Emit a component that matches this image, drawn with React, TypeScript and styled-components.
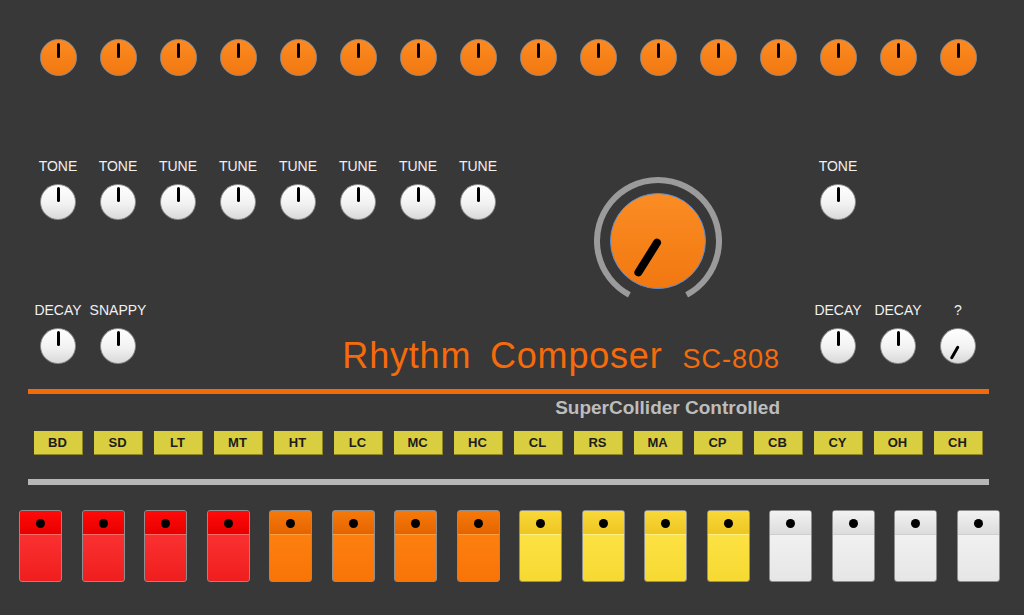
import React from "react";
import styled, { createGlobalStyle } from "styled-components";

const GlobalStyle = createGlobalStyle`
  html, body {
    margin: 0;
    padding: 0;
    background: #383838;
  }
  body {
    font-family: "Liberation Sans", Arial, sans-serif;
  }
`;

type Cell = { col: number; label: string; angle?: number };
type PadTone = "red" | "orange" | "yellow" | "white";

const toneRow: Cell[] = [
  { col: 1, label: "TONE" },
  { col: 2, label: "TONE" },
  { col: 3, label: "TUNE" },
  { col: 4, label: "TUNE" },
  { col: 5, label: "TUNE" },
  { col: 6, label: "TUNE" },
  { col: 7, label: "TUNE" },
  { col: 8, label: "TUNE" },
  { col: 14, label: "TONE" },
];

const decayRow: Cell[] = [
  { col: 1, label: "DECAY" },
  { col: 2, label: "SNAPPY" },
  { col: 14, label: "DECAY" },
  { col: 15, label: "DECAY" },
  { col: 16, label: "?", angle: 210 },
];

const instruments = ["BD", "SD", "LT", "MT", "HT", "LC", "MC", "HC", "CL", "RS", "MA", "CP", "CB", "CY", "OH", "CH"];

const padTones: PadTone[] = instruments.map((_, i) =>
  i < 4 ? "red" : i < 8 ? "orange" : i < 12 ? "yellow" : "white"
);

const padColors: Record<PadTone, { top: [string, string]; body: [string, string]; line: string }> = {
  red: { top: ["#ff0a0a", "#e80000"], body: ["#ff3a3a", "#f01e1e"], line: "#ff6a6a" },
  orange: { top: ["#f57a0a", "#e66400"], body: ["#ff8614", "#f87406"], line: "#ffa040" },
  yellow: { top: ["#f8d838", "#efc622"], body: ["#ffe64c", "#f6d932"], line: "#fff080" },
  white: { top: ["#f2f2f2", "#dcdcdc"], body: ["#f6f6f6", "#e6e6e6"], line: "#cfcfcf" },
};

export default function App() {
  return (
    <>
      <GlobalStyle />
      <Panel>
        <ControlGrid>
          {instruments.map((name, i) => (
            <TopKnob key={name} $col={i + 1} $tone="orange" $size={37}>
              <Pointer $len={15} $angle={0} />
            </TopKnob>
          ))}

          {toneRow.map((c) => (
            <KnobCell key={`t${c.col}`} $col={c.col} $row={2}>
              <Label>{c.label}</Label>
              <Knob $tone="white" $size={36}>
                <Pointer $len={15} $angle={c.angle ?? 0} />
              </Knob>
            </KnobCell>
          ))}

          <BigKnob>
            <svg width="128" height="128" viewBox="0 0 128 128">
              <defs>
                <linearGradient id="bigOrange" x1="0" y1="0" x2="0" y2="1">
                  <stop offset="0" stopColor="#fb8c24" />
                  <stop offset="1" stopColor="#f27810" />
                </linearGradient>
              </defs>
              <path
                d="M35.36 117.86 A61 61 0 1 1 92.64 117.86"
                fill="none"
                stroke="#9b9b9b"
                strokeWidth="6"
              />
              <circle cx="64" cy="64" r="47.5" fill="url(#bigOrange)" stroke="#5b8fd6" strokeWidth="1" />
              <line x1="63" y1="65.7" x2="44.4" y2="95.4" stroke="#000" strokeWidth="8" strokeLinecap="round" />
            </svg>
          </BigKnob>

          {decayRow.map((c) => (
            <KnobCell key={`d${c.col}`} $col={c.col} $row={3}>
              <Label>{c.label}</Label>
              <Knob $tone="white" $size={36}>
                <Pointer $len={15} $angle={c.angle ?? 0} />
              </Knob>
            </KnobCell>
          ))}

          <Title>
            <TitleMain>Rhythm Composer</TitleMain>
            <TitleModel>SC-808</TitleModel>
          </Title>
        </ControlGrid>

        <OrangeRule />
        <Subtitle>SuperCollider Controlled</Subtitle>

        <LabelRow>
          {instruments.map((name) => (
            <InstLabel key={name}>{name}</InstLabel>
          ))}
        </LabelRow>

        <GrayRule />

        <PadRow>
          {instruments.map((name, i) => (
            <Pad key={name} $tone={padTones[i]}>
              <PadTop $tone={padTones[i]}>
                <Dot />
              </PadTop>
            </Pad>
          ))}
        </PadRow>
      </Panel>
    </>
  );
}

const Panel = styled.main`
  width: 1024px;
  height: 615px;
  padding-top: 39px;
  box-sizing: border-box;
  overflow: hidden;
  background: #383838;
`;

const ControlGrid = styled.div`
  display: grid;
  grid-template-columns: repeat(16, 60px);
  grid-template-rows: 37px 62px 77px;
  row-gap: 82px;
  margin-left: 28px;
  width: 960px;
`;

const Knob = styled.div<{ $tone: "orange" | "white"; $size: number }>`
  position: relative;
  width: ${({ $size }) => $size}px;
  height: ${({ $size }) => $size}px;
  box-sizing: border-box;
  border-radius: 50%;
  border: 1.5px solid #8a8d92;
  background: ${({ $tone }) =>
    $tone === "orange"
      ? "linear-gradient(#fb8a22, #f27810)"
      : "linear-gradient(#ffffff, #f2f2f2 55%, #d9d9d9)"};
`;

const TopKnob = styled(Knob)<{ $col: number }>`
  grid-row: 1;
  grid-column: ${({ $col }) => $col};
  justify-self: center;
`;

const Pointer = styled.span<{ $len: number; $angle: number }>`
  position: absolute;
  left: 50%;
  bottom: 50%;
  width: 3px;
  height: ${({ $len }) => $len}px;
  margin-left: -1.5px;
  background: #000;
  border-radius: 1.5px;
  transform-origin: 50% 100%;
  transform: rotate(${({ $angle }) => $angle}deg);
`;

const KnobCell = styled.div<{ $col: number; $row: number }>`
  grid-column: ${({ $col }) => $col};
  grid-row: ${({ $row }) => $row};
  align-self: start;
  display: flex;
  flex-direction: column;
  align-items: center;
  gap: 10px;
`;

const Label = styled.div`
  font-size: 14px;
  line-height: 16px;
  color: #f0f0f0;
  white-space: nowrap;
`;

const BigKnob = styled.div`
  grid-column: 10 / 13;
  grid-row: 2 / 4;
  justify-self: center;
  align-self: start;
  margin-top: 19px;
  width: 128px;
  height: 128px;
`;

const Title = styled.div`
  grid-column: 4 / 14;
  grid-row: 3;
  align-self: end;
  justify-self: end;
  margin-right: 28px;
  display: flex;
  align-items: baseline;
  gap: 20px;
  color: #f56b0c;
  white-space: nowrap;
`;

const TitleMain = styled.span`
  font-size: 36px;
  line-height: 40px;
  letter-spacing: 0.8px;
  word-spacing: 8px;
`;

const TitleModel = styled.span`
  font-size: 27px;
  line-height: 40px;
  letter-spacing: 1px;
`;

const OrangeRule = styled.div`
  margin: 10px 0 0 28px;
  width: 961px;
  height: 5px;
  background: #f26b0a;
`;

const Subtitle = styled.div`
  margin: 4px 0 0 28px;
  width: 960px;
  padding-right: 208px;
  box-sizing: border-box;
  text-align: right;
  font-size: 19px;
  line-height: 20px;
  font-weight: bold;
  color: #bdbdbd;
`;

const LabelRow = styled.div`
  display: grid;
  grid-template-columns: repeat(16, 60px);
  justify-items: center;
  margin: 13px 0 0 28px;
`;

const InstLabel = styled.div`
  width: 49px;
  height: 24px;
  box-sizing: border-box;
  display: flex;
  align-items: center;
  justify-content: center;
  background: #d9cd40;
  border-right: 1px solid #8f8724;
  border-bottom: 1px solid #8f8724;
  font-size: 13px;
  font-weight: bold;
  color: #1c1c1c;
`;

const GrayRule = styled.div`
  margin: 24px 0 0 28px;
  width: 961px;
  height: 6px;
  background: #b7b7b7;
`;

const PadRow = styled.div`
  display: grid;
  grid-template-columns: repeat(16, 43px);
  column-gap: 19.5px;
  padding-left: 19px;
  margin-top: 25px;
`;

const Pad = styled.div<{ $tone: PadTone }>`
  height: 72px;
  box-sizing: border-box;
  border: 1.5px solid #8e8e8e;
  border-radius: 3px;
  overflow: hidden;
  background: ${({ $tone }) =>
    `linear-gradient(${padColors[$tone].body[0]}, ${padColors[$tone].body[1]})`};
`;

const PadTop = styled.div<{ $tone: PadTone }>`
  height: 21px;
  display: flex;
  align-items: center;
  justify-content: center;
  padding-top: 2px;
  border-bottom: 1px solid ${({ $tone }) => padColors[$tone].line};
  background: ${({ $tone }) =>
    `linear-gradient(${padColors[$tone].top[0]}, ${padColors[$tone].top[1]})`};
`;

const Dot = styled.span`
  width: 9px;
  height: 9px;
  border-radius: 50%;
  background: #000;
`;
